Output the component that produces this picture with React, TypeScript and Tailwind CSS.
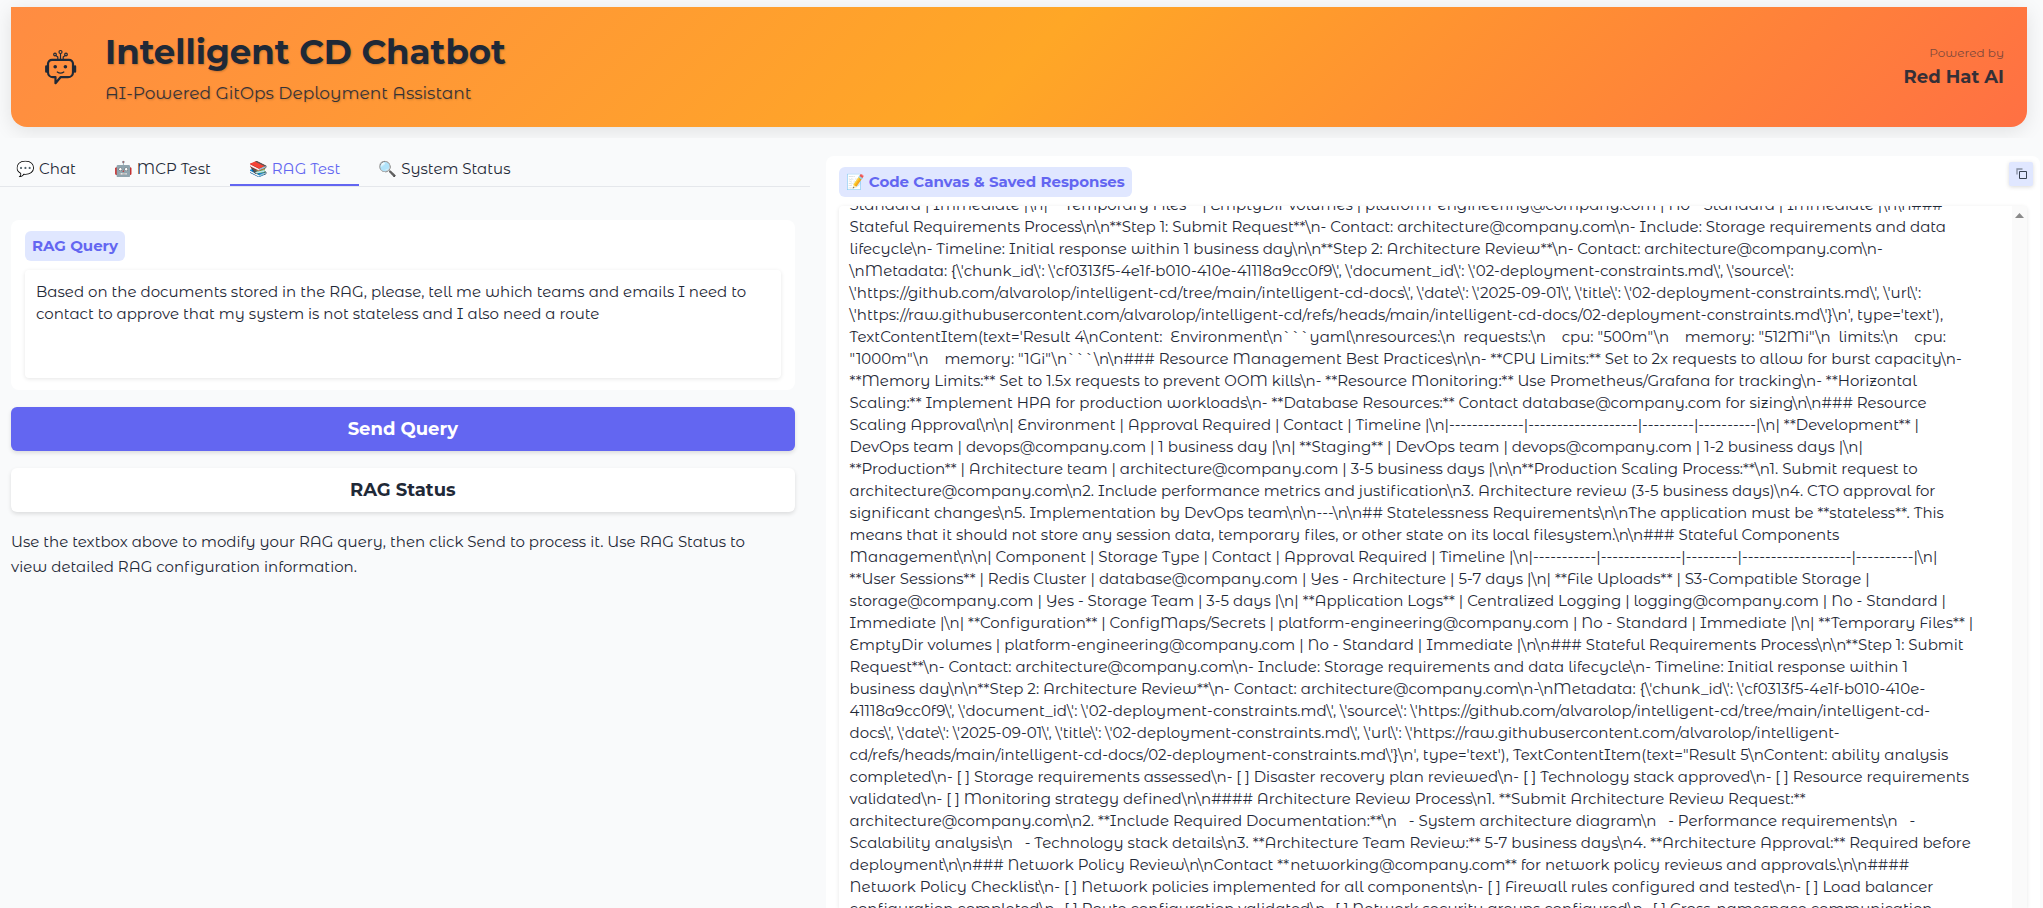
import { useEffect, useRef, useState } from 'react';

const FENCE = '```';

const SAVED_RESPONSE = String.raw`Standard | Immediate |\n| **Temporary Files** | EmptyDir volumes | platform-engineering@company.com | No - Standard | Immediate |\n\n###
Stateful Requirements Process\n\n**Step 1: Submit Request**\n- Contact: architecture@company.com\n- Include: Storage requirements and data
lifecycle\n- Timeline: Initial response within 1 business day\n\n**Step 2: Architecture Review**\n- Contact: architecture@company.com\n-
\nMetadata: {\'chunk_id\': \'cf0313f5-4e1f-b010-410e-41118a9cc0f9\', \'document_id\': \'02-deployment-constraints.md\', \'source\':
\'https://github.com/alvarolop/intelligent-cd/tree/main/intelligent-cd-docs\', \'date\': \'2025-09-01\', \'title\': \'02-deployment-constraints.md\', \'url\':
\'https://raw.githubusercontent.com/alvarolop/intelligent-cd/refs/heads/main/intelligent-cd-docs/02-deployment-constraints.md\'}\n', type='text'),
TextContentItem(text='Result 4\nContent:  Environment\n${FENCE}yaml\nresources:\n  requests:\n    cpu: "500m"\n    memory: "512Mi"\n  limits:\n    cpu:
"1000m"\n    memory: "1Gi"\n${FENCE}\n\n### Resource Management Best Practices\n\n- **CPU Limits:** Set to 2x requests to allow for burst capacity\n-
**Memory Limits:** Set to 1.5x requests to prevent OOM kills\n- **Resource Monitoring:** Use Prometheus/Grafana for tracking\n- **Horizontal
Scaling:** Implement HPA for production workloads\n- **Database Resources:** Contact database@company.com for sizing\n\n### Resource
Scaling Approval\n\n| Environment | Approval Required | Contact | Timeline |\n|-------------|-------------------|---------|----------|\n| **Development** |
DevOps team | devops@company.com | 1 business day |\n| **Staging** | DevOps team | devops@company.com | 1-2 business days |\n|
**Production** | Architecture team | architecture@company.com | 3-5 business days |\n\n**Production Scaling Process:**\n1. Submit request to
architecture@company.com\n2. Include performance metrics and justification\n3. Architecture review (3-5 business days)\n4. CTO approval for
significant changes\n5. Implementation by DevOps team\n\n---\n\n## Statelessness Requirements\n\nThe application must be **stateless**. This
means that it should not store any session data, temporary files, or other state on its local filesystem.\n\n### Stateful Components
Management\n\n| Component | Storage Type | Contact | Approval Required | Timeline |\n|-----------|--------------|---------|-------------------|----------|\n|
**User Sessions** | Redis Cluster | database@company.com | Yes - Architecture | 5-7 days |\n| **File Uploads** | S3-Compatible Storage |
storage@company.com | Yes - Storage Team | 3-5 days |\n| **Application Logs** | Centralized Logging | logging@company.com | No - Standard |
Immediate |\n| **Configuration** | ConfigMaps/Secrets | platform-engineering@company.com | No - Standard | Immediate |\n| **Temporary Files** |
EmptyDir volumes | platform-engineering@company.com | No - Standard | Immediate |\n\n### Stateful Requirements Process\n\n**Step 1: Submit
Request**\n- Contact: architecture@company.com\n- Include: Storage requirements and data lifecycle\n- Timeline: Initial response within 1
business day\n\n**Step 2: Architecture Review**\n- Contact: architecture@company.com\n-\nMetadata: {\'chunk_id\': \'cf0313f5-4e1f-b010-410e-
41118a9cc0f9\', \'document_id\': \'02-deployment-constraints.md\', \'source\': \'https://github.com/alvarolop/intelligent-cd/tree/main/intelligent-cd-
docs\', \'date\': \'2025-09-01\', \'title\': \'02-deployment-constraints.md\', \'url\': \'https://raw.githubusercontent.com/alvarolop/intelligent-
cd/refs/heads/main/intelligent-cd-docs/02-deployment-constraints.md\'}\n', type='text'), TextContentItem(text="Result 5\nContent: ability analysis
completed\n- [ ] Storage requirements assessed\n- [ ] Disaster recovery plan reviewed\n- [ ] Technology stack approved\n- [ ] Resource requirements
validated\n- [ ] Monitoring strategy defined\n\n#### Architecture Review Process\n1. **Submit Architecture Review Request:**
architecture@company.com\n2. **Include Required Documentation:**\n   - System architecture diagram\n   - Performance requirements\n   -
Scalability analysis\n   - Technology stack details\n3. **Architecture Team Review:** 5-7 business days\n4. **Architecture Approval:** Required before
deployment\n\n### Network Policy Review\n\nContact **networking@company.com** for network policy reviews and approvals.\n\n####
Network Policy Checklist\n- [ ] Network policies implemented for all components\n- [ ] Firewall rules configured and tested\n- [ ] Load balancer
configuration completed\n- [ ] Route configuration validated\n- [ ] Network security groups configured\n- [ ] Cross-namespace communication`;

const TABS = [
  { icon: '💬', label: 'Chat' },
  { icon: '🤖', label: 'MCP Test' },
  { icon: '📚', label: 'RAG Test' },
  { icon: '🔍', label: 'System Status' },
];

const HEADING = "font-['Montserrat','Inter',sans-serif] font-bold";
const LABEL =
  "font-['Montserrat','Inter',sans-serif] font-bold rounded-md bg-[#e0e7ff] px-[7px] text-[15px] leading-[30px] text-[#6366f1]";

function BotLogo() {
  return (
    <svg width="34" height="36" viewBox="0 0 34 36" fill="none" stroke="#1f2937" strokeLinecap="round" strokeLinejoin="round" aria-hidden="true">
      <path d="M8 10.800h17a4 4 0 0 1 4 4v8.400a5 5 0 0 1-5 5h-7.500l-5 6v-6H9a5 5 0 0 1-5-5v-8.400a4 4 0 0 1 4-4z" strokeWidth="2.200" />
      <path d="M2.300 17.500v5M31 17.500v5" strokeWidth="2.400" />
      <circle cx="11.200" cy="17.700" r="1.800" fill="#1f2937" stroke="none" />
      <circle cx="21.400" cy="17.700" r="1.800" fill="#1f2937" stroke="none" />
      <path d="M13.300 23Q16.500 25.200 19.800 23" strokeWidth="1.300" />
      <path d="M16.500 10V4.800M13.800 10V8L12 6.600M19.200 10V8L21 6.600" strokeWidth="1.200" />
      <circle cx="16.500" cy="3" r="1.500" strokeWidth="1.200" />
      <circle cx="11" cy="5.500" r="1.300" strokeWidth="1.200" />
      <circle cx="22" cy="5.500" r="1.300" strokeWidth="1.200" />
    </svg>
  );
}

function Header() {
  return (
    <div className="shrink-0 overflow-hidden pt-[7px] pr-4 pb-[11px] pl-[11px]">
      <header className="flex min-h-[120px] items-center justify-between rounded-b-2xl bg-[linear-gradient(135deg,#ff8c42_0%,#ffa726_50%,#ff7043_100%)] pr-[23px] pl-[33px] shadow-[0_4px_20px_rgba(0,0,0,0.1)]">
        <div className="flex items-center gap-[27px]">
          <BotLogo />
          <div className="[text-shadow:1px_1px_2px_rgba(0,0,0,0.2)]">
            <h1 className={`${HEADING} text-[34px] leading-[46px]`}>Intelligent CD Chatbot</h1>
            <p className="mt-[6px] text-[17px] leading-6 opacity-90">AI-Powered GitOps Deployment Assistant</p>
          </div>
        </div>
        <div className="text-right">
          <p className="text-xs leading-5 opacity-60">Powered by</p>
          <p className={`${HEADING} text-lg leading-7 opacity-90`}>Red Hat AI</p>
        </div>
      </header>
    </div>
  );
}

function RagPanel() {
  const [query, setQuery] = useState(
    'Based on the documents stored in the RAG, please, tell me which teams and emails I need to contact to approve that my system is not stateless and I also need a route',
  );
  return (
    <div className="flex flex-col gap-[17px] pt-[33px] pr-[15px] pl-[11px]">
      <div className="flex flex-col items-start rounded-lg bg-white px-[14px] pt-[11px] pb-3">
        <label htmlFor="rag-query" className={LABEL}>
          RAG Query
        </label>
        <textarea
          id="rag-query"
          value={query}
          onChange={(e) => setQuery(e.target.value)}
          className="mt-[9px] h-[108px] w-full resize-none rounded-sm bg-white px-[11px] py-[11px] text-[15px] leading-[22px] shadow-[0_1px_4px_rgba(0,0,0,0.1)] outline-none"
        />
      </div>
      <button type="button" className={`${HEADING} h-11 w-full rounded-md bg-[#6366f1] text-lg text-white shadow-[0_2px_4px_rgba(0,0,0,0.12)]`}>
        Send Query
      </button>
      <button type="button" className={`${HEADING} h-11 w-full rounded-md bg-white text-lg shadow-[0_2px_4px_rgba(0,0,0,0.12)]`}>
        RAG Status
      </button>
      <p className="pr-5 text-[15px] leading-[25px]">
        Use the textbox above to modify your RAG query, then click Send to process it. Use RAG Status to view detailed RAG configuration information.
      </p>
    </div>
  );
}

function CodeCanvas() {
  const area = useRef<HTMLTextAreaElement>(null);
  useEffect(() => {
    if (area.current) area.current.scrollTop = 12;
  }, []);
  return (
    <section className="flex min-h-0 min-w-0 flex-col rounded-t-lg bg-white pt-[6px] pr-[7px] pl-[13px]">
      <div className="flex items-start justify-between">
        <label htmlFor="code-canvas" className={`${LABEL} mt-[5px]`}>
          📝 Code Canvas &amp; Saved Responses
        </label>
        <button
          type="button"
          aria-label="Copy"
          onClick={() => navigator.clipboard?.writeText(SAVED_RESPONSE)}
          className="flex size-6 items-center justify-center rounded-xs bg-[#e0e7ff] pl-[2px] shadow-[0_1px_4px_rgba(0,0,0,0.15)]"
        >
          <svg width="12" height="12" viewBox="0 0 12 12" fill="none" aria-hidden="true">
            <path d="M1 6.500V1H6.500" stroke="#4b5563" strokeOpacity="0.600" strokeWidth="1.300" />
            <path d="M3.500 3.500h7v7h-7z" stroke="#374151" />
          </svg>
        </button>
      </div>
      <div className="mt-[9px] mr-[6px] flex min-h-0 flex-1 rounded-t-sm shadow-[0_1px_4px_rgba(0,0,0,0.1)]">
        <textarea
          id="code-canvas"
          ref={area}
          readOnly
          value={SAVED_RESPONSE}
          className="min-w-0 flex-1 resize-none overflow-y-scroll pb-4 pl-[11px] text-[15px] leading-[22px] whitespace-pre outline-none [scrollbar-width:none]"
        />
        <div className="flex w-[15px] justify-center bg-[#fafafa] pt-[7px]">
          <svg width="9" height="5" viewBox="0 0 9 5" aria-hidden="true">
            <path d="M4.500 0L9 5H0z" fill="#8a8a8a" />
          </svg>
        </div>
      </div>
    </section>
  );
}

export default function App() {
  const [active, setActive] = useState('RAG Test');
  return (
    <div className="flex h-screen flex-col overflow-hidden bg-[#f9fafb] font-['Montserrat_Alternates','Inter',sans-serif] text-[#1f2937]">
      <Header />
      <main className="grid min-h-0 flex-1 grid-cols-[minmax(0,2fr)_minmax(0,3fr)] grid-rows-[minmax(0,1fr)] gap-4 pt-[18px] pr-[3px]">
        <div className="min-w-0">
          <div role="tablist" className="flex border-b border-[#e5e7eb]">
            {TABS.map((tab) => (
              <button
                key={tab.label}
                type="button"
                role="tab"
                aria-selected={active === tab.label}
                onClick={() => setActive(tab.label)}
                className={`h-[30px] border-b-2 px-[19px] pb-[2px] text-[15px] leading-[26px] first:pl-4 ${
                  active === tab.label ? 'border-[#6366f1] text-[#6366f1]' : 'border-transparent'
                }`}
              >
                {tab.icon} {tab.label}
              </button>
            ))}
          </div>
          <RagPanel />
        </div>
        <CodeCanvas />
      </main>
    </div>
  );
}
